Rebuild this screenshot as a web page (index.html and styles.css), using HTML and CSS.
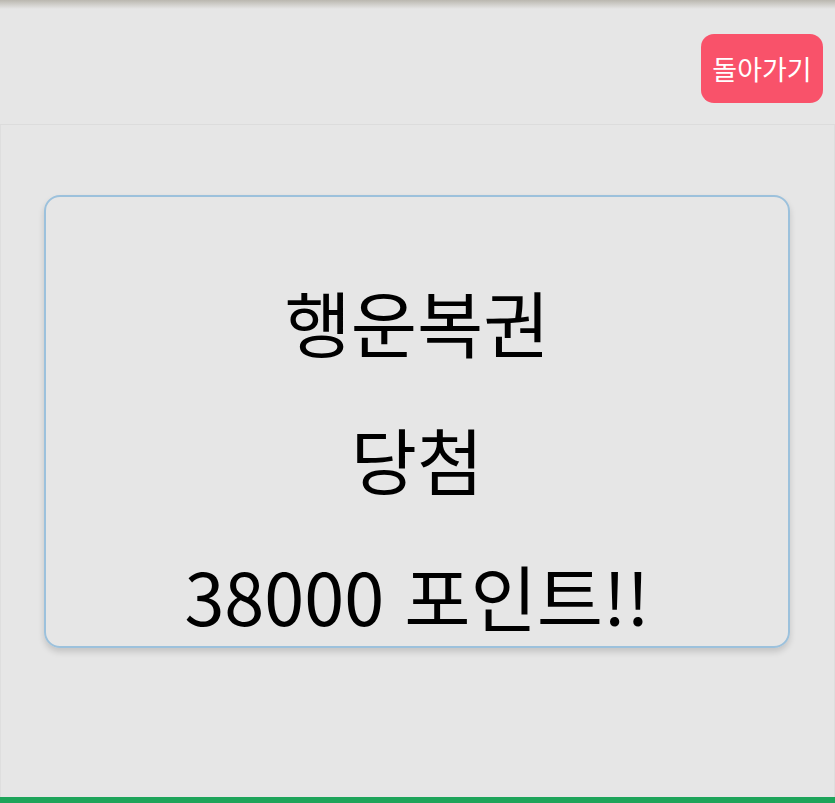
FILE: index.html
```html
<!DOCTYPE html>
<html lang="ko">
<head>
<meta charset="utf-8">
<link rel="stylesheet" href="styles.css">
</head>
<body>
<div class="page">
  <div class="topshade"></div>
  <header class="header">
    <button class="back">돌아가기</button>
  </header>
  <main class="content">
    <section class="card">
      <p class="line">행운복권</p>
      <p class="line">당첨</p>
      <p class="line">38000 포인트!!</p>
    </section>
  </main>
  <div class="greenbar"></div>
</div>
</body>
</html>
```
FILE: styles.css
```css
html, body {
  margin: 0;
  padding: 0;
  background: #e6e6e6;
}
.page {
  width: 835px;
  height: 803px;
  display: flex;
  flex-direction: column;
  position: relative;
  font-family: "Noto Sans CJK KR", "Noto Sans", sans-serif;
  overflow: hidden;
}
.topshade {
  position: absolute;
  left: 0;
  right: 0;
  top: 0;
  height: 9px;
  background: linear-gradient(to bottom, rgba(150,145,130,0.55), rgba(200,200,195,0));
}
.header {
  height: 125px;
  border-bottom: 1px solid #dcdcdc;
  display: flex;
  justify-content: flex-end;
  align-items: flex-start;
  box-sizing: border-box;
  padding: 34px 12px 0 0;
}
.back {
  width: 122px;
  height: 69px;
  background: #f9526a;
  border: none;
  border-radius: 13px;
  color: #ffffff;
  font-family: "Noto Sans CJK KR", sans-serif;
  font-size: 27px;
  padding: 0;
  line-height: 1;
}
.content {
  flex: 1;
  padding: 70px 44px 0 43px;
  border-left: 1px solid #dedede;
  border-right: 1px solid #dedede;
}
.card {
  height: 453px;
  box-sizing: border-box;
  border: 2px solid #9cc1dc;
  border-radius: 16px;
  box-shadow: 0 4px 6px rgba(0,0,0,0.15);
  display: flex;
  flex-direction: column;
  align-items: center;
  padding-top: 55px;
}
.line {
  margin: 0;
  font-size: 72px;
  line-height: 137px;
  height: 137px;
  color: #000;
  text-align: center;
  white-space: nowrap;
}
.greenbar {
  height: 6px;
  background: #1ea45a;
}
```
